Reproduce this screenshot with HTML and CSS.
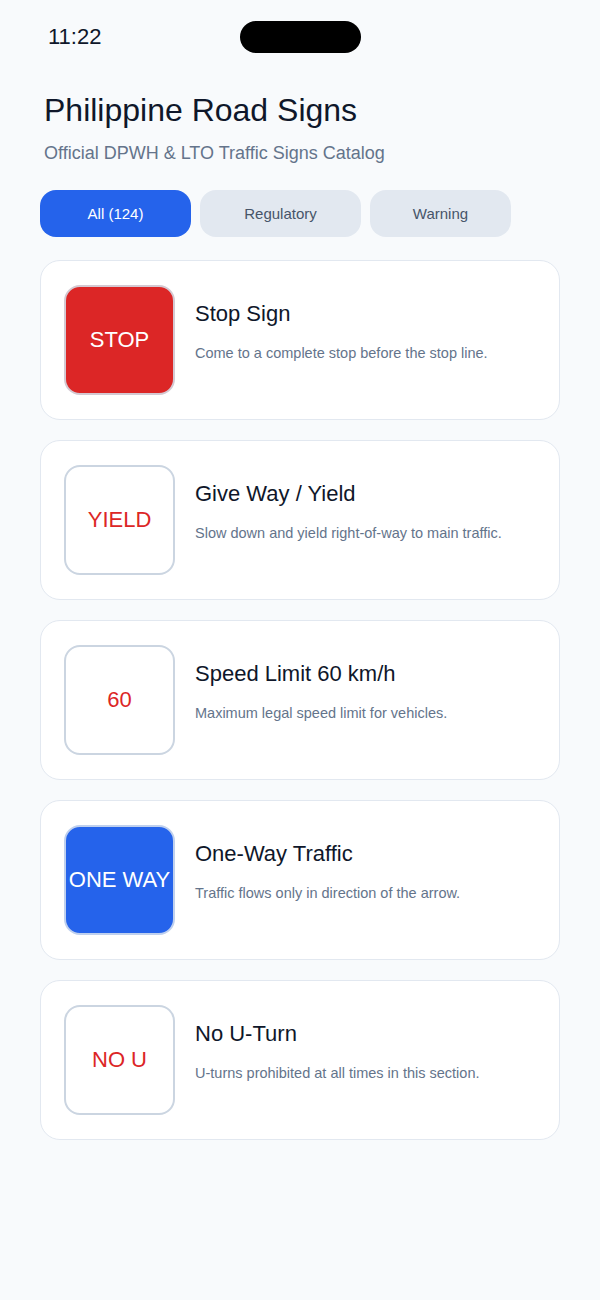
FILE: index.html
```html
<!DOCTYPE html>
<html lang="en">
<head>
    <meta charset="UTF-8">
    <meta name="viewport" content="width=device-width, initial-scale=1.0">
    <title>Philippine Road Signs</title>
    <link rel="stylesheet" href="styles.css">
</head>
<body>
    <div class="statusbar">
        <span class="time">11:22</span>
        <div class="notch"></div>
    </div>

    <div class="page">
        <h1 class="title">Philippine Road Signs</h1>
        <p class="subtitle">Official DPWH &amp; LTO Traffic Signs Catalog</p>

        <div class="chips">
            <button class="chip active chip-all">All (124)</button>
            <button class="chip chip-reg">Regulatory</button>
            <button class="chip chip-warn">Warning</button>
        </div>

        <div class="list">
            <div class="card">
                <div class="sign sign-red">STOP</div>
                <div class="info">
                    <h2 class="name">Stop Sign</h2>
                    <p class="desc">Come to a complete stop before the stop line.</p>
                </div>
            </div>
            <div class="card">
                <div class="sign sign-plain">YIELD</div>
                <div class="info">
                    <h2 class="name">Give Way / Yield</h2>
                    <p class="desc">Slow down and yield right-of-way to main traffic.</p>
                </div>
            </div>
            <div class="card">
                <div class="sign sign-plain">60</div>
                <div class="info">
                    <h2 class="name">Speed Limit 60 km/h</h2>
                    <p class="desc">Maximum legal speed limit for vehicles.</p>
                </div>
            </div>
            <div class="card">
                <div class="sign sign-blue">ONE WAY</div>
                <div class="info">
                    <h2 class="name">One-Way Traffic</h2>
                    <p class="desc">Traffic flows only in direction of the arrow.</p>
                </div>
            </div>
            <div class="card">
                <div class="sign sign-plain">NO U</div>
                <div class="info">
                    <h2 class="name">No U-Turn</h2>
                    <p class="desc">U-turns prohibited at all times in this section.</p>
                </div>
            </div>
        </div>
    </div>
</body>
</html>
```

FILE: styles.css
```css
body {
    margin: 0;
    background: #f8fafc;
    font-family: "Liberation Sans", Arial, sans-serif;
    color: #0f172a;
}

.statusbar {
    display: flex;
    align-items: center;
    height: 32px;
    padding: 21px 0 0 48px;
}
.time {
    font-size: 22px;
    color: #0f172a;
    width: 192px;
}
.notch {
    width: 121px;
    height: 32px;
    border-radius: 16px;
    background: #000;
}

.page {
    padding: 0 40px;
}

.title {
    margin: 37px 0 0 4px;
    font-size: 32px;
    font-weight: 400;
    line-height: 40px;
    color: #0f172a;
}
.subtitle {
    margin: 11px 0 0 4px;
    font-size: 18px;
    line-height: 24px;
    color: #64748b;
}

.chips {
    display: flex;
    gap: 9px;
    margin-top: 25px;
}
.chip {
    height: 47px;
    border: none;
    border-radius: 16px;
    background: #e2e8f0;
    color: #475569;
    font-family: inherit;
    font-size: 15px;
}
.chip.active {
    background: #2563eb;
    color: #fff;
}
.chip-all { width: 151px; }
.chip-reg { width: 161px; }
.chip-warn { width: 141px; }

.list {
    display: flex;
    flex-direction: column;
    gap: 20px;
    margin-top: 23px;
}
.card {
    display: flex;
    gap: 20px;
    padding: 24px 23px;
    background: #fff;
    border: 1px solid #e2e8f0;
    border-radius: 20px;
}
.sign {
    flex: none;
    width: 107px;
    height: 106px;
    border: 2px solid #cbd5e1;
    border-radius: 16px;
    display: flex;
    align-items: center;
    justify-content: center;
    font-size: 22px;
    white-space: nowrap;
}
.sign-red {
    background: #dc2626;
    color: #fff;
    border-color: #d4c9d2;
}
.sign-blue {
    background: #2563eb;
    color: #fff;
    border-color: #bfd0ee;
}
.sign-plain {
    background: #fff;
    color: #dc2626;
}

.info {
    padding-top: 16px;
}
.name {
    margin: 0;
    font-size: 22px;
    font-weight: 400;
    line-height: 26px;
    color: #0f172a;
}
.desc {
    margin: 16px 0 0;
    font-size: 14.5px;
    line-height: 20px;
    color: #64748b;
}
```
